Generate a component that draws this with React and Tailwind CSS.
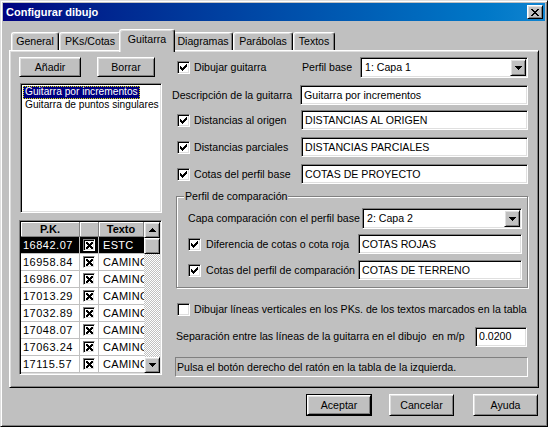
import React from 'react';

// Win9x style bevels
const raised =
  'bg-[#c0c0c0] border border-t-white border-l-white border-r-black border-b-black shadow-[inset_1px_1px_0_#dfdfdf,inset_-1px_-1px_0_#808080]';
const sunken =
  'border border-t-[#808080] border-l-[#808080] border-r-white border-b-white shadow-[inset_1px_1px_0_#000,inset_-1px_-1px_0_#dfdfdf]';

const Check = ({ checked = true }) => (
  <div className={`w-[13px] h-[13px] shrink-0 bg-white ${sunken}`}>
    {checked && (
      <svg width="11" height="11" viewBox="0 0 11 11" shapeRendering="crispEdges">
        <path d="M2 4h1v3H2zM3 5h1v3H3zM4 6h1v3H4zM5 5h1v3H5zM6 4h1v3H6zM7 3h1v3H7zM8 2h1v3H8z" fill="#000" />
      </svg>
    )}
  </div>
);

const ArrowDown = () => (
  <svg width="7" height="4" viewBox="0 0 7 4" shapeRendering="crispEdges">
    <path d="M0 0h7v1H0zM1 1h5v1H1zM2 2h3v1H2zM3 3h1v1H3z" fill="#000" />
  </svg>
);

const ArrowUp = () => (
  <svg width="7" height="4" viewBox="0 0 7 4" shapeRendering="crispEdges">
    <path d="M3 0h1v1H3zM2 1h3v1H2zM1 2h5v1H1zM0 3h7v1H0z" fill="#000" />
  </svg>
);

const Combo = ({ value, className = '' }) => (
  <div className={`h-[21px] bg-white p-[1px] flex items-center ${sunken} ${className}`}>
    <span className="flex-1 pl-[3px] whitespace-nowrap">{value}</span>
    <div className={`w-[16px] h-[17px] flex items-center justify-center ${raised}`}>
      <ArrowDown />
    </div>
  </div>
);

const Field = ({ value, className = '' }) => (
  <div className={`h-[20px] bg-white pl-[3px] flex items-center whitespace-nowrap overflow-hidden ${sunken} ${className}`}>
    {value}
  </div>
);

const Button = ({ label, className = '' }) => (
  <div className={`h-[20px] flex items-center justify-center ${raised} ${className}`}>{label}</div>
);

const XBox = () => (
  <div className={`w-[12px] h-[12px] bg-white ${sunken}`}>
    <svg width="10" height="10" viewBox="0 0 10 10" shapeRendering="crispEdges">
      <path
        d="M2 2h2v1H2zM7 2h2v1H7zM2 3h3v1H2zM6 3h3v1H6zM3 4h5v1H3zM4 5h3v1H4zM3 6h5v1H3zM2 7h3v1H2zM6 7h3v1H6zM2 8h2v1H2zM7 8h2v1H7z"
        fill="#000"
      />
    </svg>
  </div>
);

const rows = [
  ['16842.07', 'ESTC'],
  ['16958.84', 'CAMINO'],
  ['16986.07', 'CAMINO'],
  ['17013.29', 'CAMINO'],
  ['17032.89', 'CAMINO'],
  ['17048.07', 'CAMINO'],
  ['17063.24', 'CAMINO'],
  ['17115.57', 'CAMINO'],
];

const tabs = [
  { label: 'General', w: 'w-[48px]' },
  { label: 'PKs/Cotas', w: 'w-[62px]' },
  { label: 'Guitarra', w: 'w-[56px]', active: true },
  { label: 'Diagramas', w: 'w-[60px]' },
  { label: 'Parábolas', w: 'w-[60px]' },
  { label: 'Textos', w: 'w-[42px]' },
];

export default function App() {
  return (
    <div className="w-[548px] h-[427px] bg-[#c0c0c0] p-[2px] border border-t-[#dfdfdf] border-l-[#dfdfdf] border-r-black border-b-black shadow-[inset_1px_1px_0_#fff,inset_-1px_-1px_0_#808080] font-['Liberation_Sans',Arial,sans-serif] text-[10.6px] text-black leading-none select-none">
      {/* title bar */}
      <div className="h-[18px] bg-linear-to-r from-[#000080] to-[#1084d0] flex items-center justify-between pl-[3px] pr-[2px]">
        <span className="text-white font-bold text-[11px]">Configurar dibujo</span>
        <div className={`w-[16px] h-[14px] flex items-center justify-center ${raised}`}>
          <svg width="8" height="7" viewBox="0 0 8 7" shapeRendering="crispEdges">
            <path
              d="M0 0h2v1H0zM6 0h2v1H6zM1 1h2v1H1zM5 1h2v1H5zM2 2h4v1H2zM3 3h2v1H3zM2 4h4v1H2zM1 5h2v1H1zM5 5h2v1H5zM0 6h2v1H0zM6 6h2v1H6z"
              fill="#000"
            />
          </svg>
        </div>
      </div>

      {/* tabs */}
      <div className="mt-[8px] ml-[8px] h-[21px] flex items-end">
        {tabs.map((t) =>
          t.active ? (
            <div
              key={t.label}
              className={`${t.w} -mx-[2px] h-[23px] -mb-[2px] relative z-10 bg-[#c0c0c0] pb-[4px] flex items-center justify-center rounded-t-[3px] border-t border-l border-r border-t-white border-l-white border-r-black shadow-[inset_-1px_0_0_#808080,inset_1px_1px_0_#dfdfdf]`}
            >
              {t.label}
            </div>
          ) : (
            <div
              key={t.label}
              className={`${t.w} h-[18px] flex items-center justify-center rounded-t-[3px] border-t border-l border-r border-t-white border-l-white border-r-black shadow-[inset_-1px_0_0_#808080,inset_1px_1px_0_#dfdfdf]`}
            >
              {t.label}
            </div>
          )
        )}
      </div>

      {/* tab panel */}
      <div className={`ml-[6px] w-[530px] h-[338px] flex pl-[9px] pt-[6px] ${raised}`}>
        {/* left column */}
        <div className="w-[143px] flex flex-col">
          <div className="flex">
            <Button label="Añadir" className="w-[62px]" />
            <Button label="Borrar" className="w-[58px] ml-[16px]" />
          </div>
          <div className={`mt-[6px] ml-[1px] w-[142px] h-[130px] bg-white p-[2px] overflow-hidden whitespace-nowrap text-[10.2px] ${sunken}`}>
            <div className="h-[13px] flex items-center">
              <span className="h-[13px] px-[1px] flex items-center bg-[#000080] text-white border border-dotted border-[#e0e000]">
                Guitarra por incrementos
              </span>
            </div>
            <div className="h-[13px] pl-[2px] flex items-center">Guitarra de puntos singulares</div>
          </div>

          {/* grid */}
          <div className={`mt-[7px] w-[143px] h-[155px] bg-white p-[1px] flex overflow-hidden ${sunken}`}>
            <div className="w-[123px] flex flex-col text-[11px]">
              <div className="h-[15px] flex shrink-0 font-bold">
                <div className="w-[59px] bg-[#c0c0c0] border-r border-b border-[#808080] shadow-[inset_1px_1px_0_#fff] flex items-center justify-center">
                  P.K.
                </div>
                <div className="w-[19px] bg-[#c0c0c0] border-r border-b border-[#808080] shadow-[inset_1px_1px_0_#fff]" />
                <div className="w-[45px] bg-[#c0c0c0] border-r border-b border-[#808080] shadow-[inset_1px_1px_0_#fff] flex items-center justify-center">
                  Texto
                </div>
              </div>
              {rows.map(([pk, txt], i) => (
                <div key={pk} className={`h-[17px] shrink-0 flex ${i === 0 ? 'bg-black text-white' : ''}`}>
                  <div className="w-[59px] pl-[2px] border-r border-b border-[#c0c0c0] flex items-center tracking-[0.5px]">
                    {pk}
                  </div>
                  <div className="w-[19px] border-r border-b border-[#c0c0c0] flex items-center justify-center">
                    <XBox />
                  </div>
                  <div className="w-[45px] pl-[4px] border-b border-[#c0c0c0] flex items-center overflow-hidden whitespace-nowrap tracking-[0.3px]">
                    {txt}
                  </div>
                </div>
              ))}
            </div>
            <div className="w-[16px] flex flex-col">
              <div className={`h-[16px] shrink-0 flex items-center justify-center ${raised}`}>
                <ArrowUp />
              </div>
              <div className={`h-[16px] shrink-0 ${raised}`} />
              <div className="flex-1 bg-[image:repeating-conic-gradient(#c0c0c0_0_25%,#fff_0_50%)] bg-[length:2px_2px]" />
              <div className={`h-[16px] shrink-0 flex items-center justify-center ${raised}`}>
                <ArrowDown />
              </div>
            </div>
          </div>
        </div>

        {/* right column */}
        <div className="ml-[10px] w-[356px] flex flex-col">
          <div className="h-[21px] flex items-center">
            <div className="w-[130px] pl-[5px] flex items-center">
              <Check />
              <span className="ml-[4px] whitespace-nowrap">Dibujar guitarra</span>
            </div>
            <span className="w-[58px]">Perfil base</span>
            <Combo value="1: Capa 1" className="w-[168px]" />
          </div>

          <div className="mt-[7px] h-[20px] flex items-center">
            <span className="w-[128px] whitespace-nowrap">Descripción de la guitarra</span>
            <Field value="Guitarra por incrementos" className="w-[228px]" />
          </div>

          {['DISTANCIAS AL ORIGEN', 'DISTANCIAS PARCIALES', 'COTAS DE PROYECTO'].map((v, i) => (
            <div key={v} className={`${i === 0 ? 'mt-[5px]' : 'mt-[7px]'} h-[20px] flex items-center`}>
              <div className="w-[129px] pl-[5px] flex items-center">
                <Check />
                <span className="ml-[4px] whitespace-nowrap">
                  {['Distancias al origen', 'Distancias parciales', 'Cotas del perfil base'][i]}
                </span>
              </div>
              <Field value={v} className="w-[227px]" />
            </div>
          ))}

          <fieldset className="mt-[6px] ml-[4px] w-[352px] p-0 pb-[7px] m-0 border border-[#808080] shadow-[inset_1px_1px_0_#fff,1px_1px_0_#fff]">
            <legend className="ml-[7px] px-[1px] leading-[13px] bg-[#c0c0c0]">Perfil de comparación</legend>
            <div className="mt-[5px] ml-[11px] h-[21px] flex items-center">
              <span className="w-[174px] whitespace-nowrap">Capa comparación con el perfil base</span>
              <Combo value="2: Capa 2" className="w-[160px]" />
            </div>
            <div className="mt-[5px] ml-[11px] h-[20px] flex items-center">
              <div className="w-[170px] flex items-center">
                <Check />
                <span className="ml-[5px] whitespace-nowrap">Diferencia de cotas o cota roja</span>
              </div>
              <Field value="COTAS ROJAS" className="w-[164px]" />
            </div>
            <div className="mt-[6px] ml-[11px] h-[20px] flex items-center">
              <div className="w-[170px] flex items-center">
                <Check />
                <span className="ml-[5px] whitespace-nowrap">Cotas del perfil de comparación</span>
              </div>
              <Field value="COTAS DE TERRENO" className="w-[164px]" />
            </div>
          </fieldset>

          <div className="mt-[13px] h-[17px] pl-[5px] flex items-center">
            <Check checked={false} />
            <span className="ml-[4px] whitespace-nowrap">
              Dibujar líneas verticales en los PKs. de los textos marcados en la tabla
            </span>
          </div>

          <div className="mt-[9px] h-[19px] flex items-center">
            <span className="w-[303px] pl-[4px] whitespace-pre">
              Separación entre las líneas de la guitarra en el dibujo  en m/p
            </span>
            <Field value="0.0200" className="w-[52px] h-[19px]" />
          </div>

          <div className="mt-[11px] ml-[3px] w-[353px] h-[20px] pl-[1px] flex items-center border border-t-[#808080] border-l-[#808080] border-r-white border-b-white whitespace-nowrap">
            Pulsa el botón derecho del ratón en la tabla de la izquierda.
          </div>
        </div>
      </div>

      {/* dialog buttons */}
      <div className="mt-[6px] ml-[303px] flex">
        <div className="w-[66px] h-[22px] border border-black flex">
          <Button label="Aceptar" className="flex-1 h-full" />
        </div>
        <Button label="Cancelar" className="ml-[17px] w-[65px] h-[22px]" />
        <Button label="Ayuda" className="ml-[19px] w-[65px] h-[22px]" />
      </div>
    </div>
  );
}
